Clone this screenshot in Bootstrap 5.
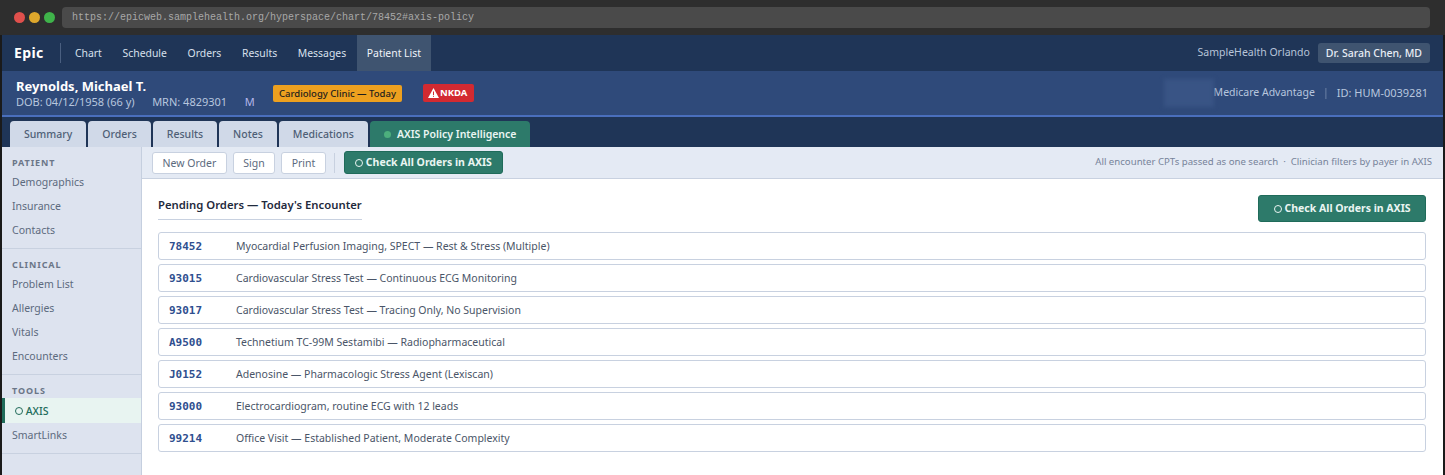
<!DOCTYPE html>
<html lang="en"><head><meta charset="utf-8"><title>Epic</title>
<link href="https://cdn.jsdelivr.net/npm/bootstrap@5.3.0/dist/css/bootstrap.min.css" rel="stylesheet">
<style>
html,body{height:475px;overflow:hidden}
body{background:#1a1a1a;font-family:"Noto Sans","Open Sans",sans-serif;font-size:10.5px;padding:0 2px;color:#334}
.chrome-bar{height:35px;background:#2e2e2e;margin:0 -2px;padding:0 15px 0 14px;gap:4px}
.dot-light{width:11px;height:11px;border-radius:50%}
.url-box{height:21px;background:#4a4a4a;border-radius:4px;margin-left:3px;padding-left:10px;font:10px "Liberation Mono",monospace;color:#a8a8a8}
.top-nav{height:36px;background:#1f3557;padding-left:12px}
.brand-word{font-size:14px;font-weight:700;color:#fff;padding-right:16px;border-right:1px solid #4a5f80;line-height:20px;margin-right:4px;letter-spacing:.4px}
.top-link{color:#d8e0ec;text-decoration:none;padding:0 10.4px 0 10.3px;line-height:36px;font-size:10.4px}
.top-link.is-on{background:#3f5470;color:#f0f4fa}
.site-name{color:#b7c4d8;font-size:10.5px}
.user-pill{background:#3f5470;color:#e8edf5;border-radius:3px;padding:0 8px;line-height:20px;font-weight:500;font-size:10.5px;margin:0 13px 0 8px}
.pt-bar{height:46px;background:#2f4a7a;border-bottom:2px solid #4a6fbd;padding:0 15px 0 14px;color:#b7c6de}
.pt-name{font-size:13px;font-weight:700;color:#fff;line-height:17px}
.pt-meta{font-size:11px;line-height:14px;width:257px;gap:17.5px}
.meta-sex{color:#b4b6ea}
.clinic-tag{background:#eda01f;color:#1d1d1d;border-radius:2px;font-size:9.5px;font-weight:500;padding:0 6px;line-height:17px}
.alert-tag{background:#d32a31;color:#fff;border-radius:2px;font-size:9.5px;font-weight:700;padding:0 7px 0 5px;line-height:18px;margin-left:21px;display:flex;align-items:center;gap:1px}
.blur-blot{width:50px;height:28px;background:#395485;filter:blur(2px)}
.id-text{font-size:11px}
.tab-strip{height:30px;background:#1f3557;padding:4px 0 0 8px;gap:2px}
.tab-item{background:#d0d9e8;color:#4f5f76;border-radius:4px 4px 0 0;padding:0 14px;line-height:26px;font-size:10.5px;font-weight:500}
.tab-item.is-axis{background:#2d7a6a;color:#eaf5f2;font-weight:600;gap:6px}
.tab-dot{width:7px;height:7px;border-radius:50%;background:#4caf7d}
.side-col{width:140px;background:#dde3ef;border-right:1px solid #c5cfdf;flex:none}
.side-group{border-bottom:1px solid #c8d1e0;padding:10px 0 6px}
.side-head{font-size:9px;font-weight:700;letter-spacing:.9px;color:#6b7688;padding:0 10px;line-height:12px;margin-bottom:1px}
.side-row{font-size:10.5px;color:#5c6a7e;padding:0 10px;line-height:24px}
.side-row.is-on{background:#e8f4f1;color:#226b5b;border-left:3px solid #1f6b5a;padding:1px 0 0 10px;font-weight:500}
.ring{display:inline-block;width:8px;height:8px;border:1.5px solid currentColor;border-radius:50%}
.tool-row{height:32px;background:#e4eaf4;border-bottom:1px solid #c8d1e0;padding:0 11px 0 10px;gap:6px;flex:none}
.plain-btn{background:#fff;border:1px solid #c8d1e0;border-radius:3px;color:#5c6a7e;font-size:10.5px;padding:0 9.5px;line-height:20px}
.green-btn{background:#2d7a6a;border:1px solid #1f6b5a;border-radius:3px;color:#eaf5f2;font-weight:700;font-size:10.5px;display:inline-flex;align-items:center;gap:3px}
.tool-row .green-btn{height:23px;padding:0 10px;margin-left:1px}
.tool-sep{width:1px;height:20px;background:#c8d1e0;margin:0 2px}
.tool-note{font-size:9.65px;color:#77839a}
.work-pane{padding:0 17px 0 16px;background:#fff;flex:1}
.pane-head{padding-top:16px;height:53px}
.pane-title{font-size:11.3px;font-weight:600;color:#1f2a3d;line-height:20px;padding-bottom:4px;border-bottom:1px solid #c8d1e0;display:inline-block}
.pane-head .green-btn{height:27px;padding:1px 14.5px 0}
.order-row{height:28px;border:1px solid #c8d1e0;border-radius:3px;margin-bottom:4px;background:#fff;padding-top:1px}
.order-code{font:700 11px "DejaVu Sans Mono",monospace;color:#2f4f8f;width:77px;padding-left:10px;flex:none}
.order-text{font-size:10.5px;color:#4a5568}
</style></head><body>
<div class="chrome-bar d-flex align-items-center">
<span class="dot-light" style="background:#e0504c"></span><span class="dot-light" style="background:#dea72c"></span><span class="dot-light" style="background:#3fb34a"></span>
<div class="url-box flex-grow-1 d-flex align-items-center">https://epicweb.samplehealth.org/hyperspace/chart/78452#axis-policy</div>
</div>
<nav class="top-nav d-flex align-items-center">
<span class="brand-word">Epic</span>
<a class="top-link" href="#">Chart</a><a class="top-link" href="#">Schedule</a><a class="top-link" href="#">Orders</a><a class="top-link" href="#">Results</a><a class="top-link" href="#">Messages</a><a class="top-link is-on" href="#">Patient List</a>
<span class="site-name ms-auto">SampleHealth Orlando</span><span class="user-pill">Dr. Sarah Chen, MD</span>
</nav>
<div class="pt-bar d-flex align-items-center">
<div><div class="pt-name">Reynolds, Michael T.</div><div class="pt-meta d-flex"><span>DOB: 04/12/1958 (66 y)</span><span>MRN: 4829301</span><span class="meta-sex">M</span></div></div>
<span class="clinic-tag">Cardiology Clinic — Today</span>
<span class="alert-tag"><svg width="11" height="10" viewBox="0 0 11 10"><path fill="#fff" d="M5.5 0 11 10H0Z"/><rect x="5" y="3.5" width="1" height="3.5" fill="#d32a31"/><rect x="5" y="7.8" width="1" height="1" fill="#d32a31"/></svg>NKDA</span>
<div class="ms-auto d-flex align-items-center"><div class="blur-blot"></div><span>Medicare Advantage</span><span class="mx-2 opacity-50">|</span><span class="id-text">ID: HUM-0039281</span></div>
</div>
<div class="tab-strip d-flex">
<span class="tab-item">Summary</span><span class="tab-item">Orders</span><span class="tab-item">Results</span><span class="tab-item">Notes</span><span class="tab-item">Medications</span><span class="tab-item is-axis d-flex align-items-center"><span class="tab-dot"></span>AXIS Policy Intelligence</span>
</div>
<div class="d-flex" style="height:328px">
<aside class="side-col">
<div class="side-group"><div class="side-head">PATIENT</div><div class="side-row">Demographics</div><div class="side-row">Insurance</div><div class="side-row">Contacts</div></div>
<div class="side-group"><div class="side-head">CLINICAL</div><div class="side-row">Problem List</div><div class="side-row">Allergies</div><div class="side-row">Vitals</div><div class="side-row">Encounters</div></div>
<div class="side-group"><div class="side-head">TOOLS</div><div class="side-row is-on"><span class="ring"></span> AXIS</div><div class="side-row">SmartLinks</div></div>
</aside>
<main class="flex-grow-1 d-flex flex-column">
<div class="tool-row d-flex align-items-center">
<span class="plain-btn">New Order</span><span class="plain-btn">Sign</span><span class="plain-btn">Print</span><span class="tool-sep"></span>
<span class="green-btn"><span class="ring"></span>Check All Orders in AXIS</span>
<span class="tool-note ms-auto">All encounter CPTs passed as one search &nbsp;·&nbsp; Clinician filters by payer in AXIS</span>
</div>
<div class="work-pane">
<div class="pane-head d-flex justify-content-between align-items-start"><span class="pane-title">Pending Orders — Today's Encounter</span><span class="green-btn"><span class="ring"></span>Check All Orders in AXIS</span></div>
<div class="order-row d-flex align-items-center"><span class="order-code">78452</span><span class="order-text">Myocardial Perfusion Imaging, SPECT — Rest &amp; Stress (Multiple)</span></div>
<div class="order-row d-flex align-items-center"><span class="order-code">93015</span><span class="order-text">Cardiovascular Stress Test — Continuous ECG Monitoring</span></div>
<div class="order-row d-flex align-items-center"><span class="order-code">93017</span><span class="order-text">Cardiovascular Stress Test — Tracing Only, No Supervision</span></div>
<div class="order-row d-flex align-items-center"><span class="order-code">A9500</span><span class="order-text">Technetium TC-99M Sestamibi — Radiopharmaceutical</span></div>
<div class="order-row d-flex align-items-center"><span class="order-code">J0152</span><span class="order-text">Adenosine — Pharmacologic Stress Agent (Lexiscan)</span></div>
<div class="order-row d-flex align-items-center"><span class="order-code">93000</span><span class="order-text">Electrocardiogram, routine ECG with 12 leads</span></div>
<div class="order-row d-flex align-items-center"><span class="order-code">99214</span><span class="order-text">Office Visit — Established Patient, Moderate Complexity</span></div>
</div>
</main>
</div>
</body></html>
